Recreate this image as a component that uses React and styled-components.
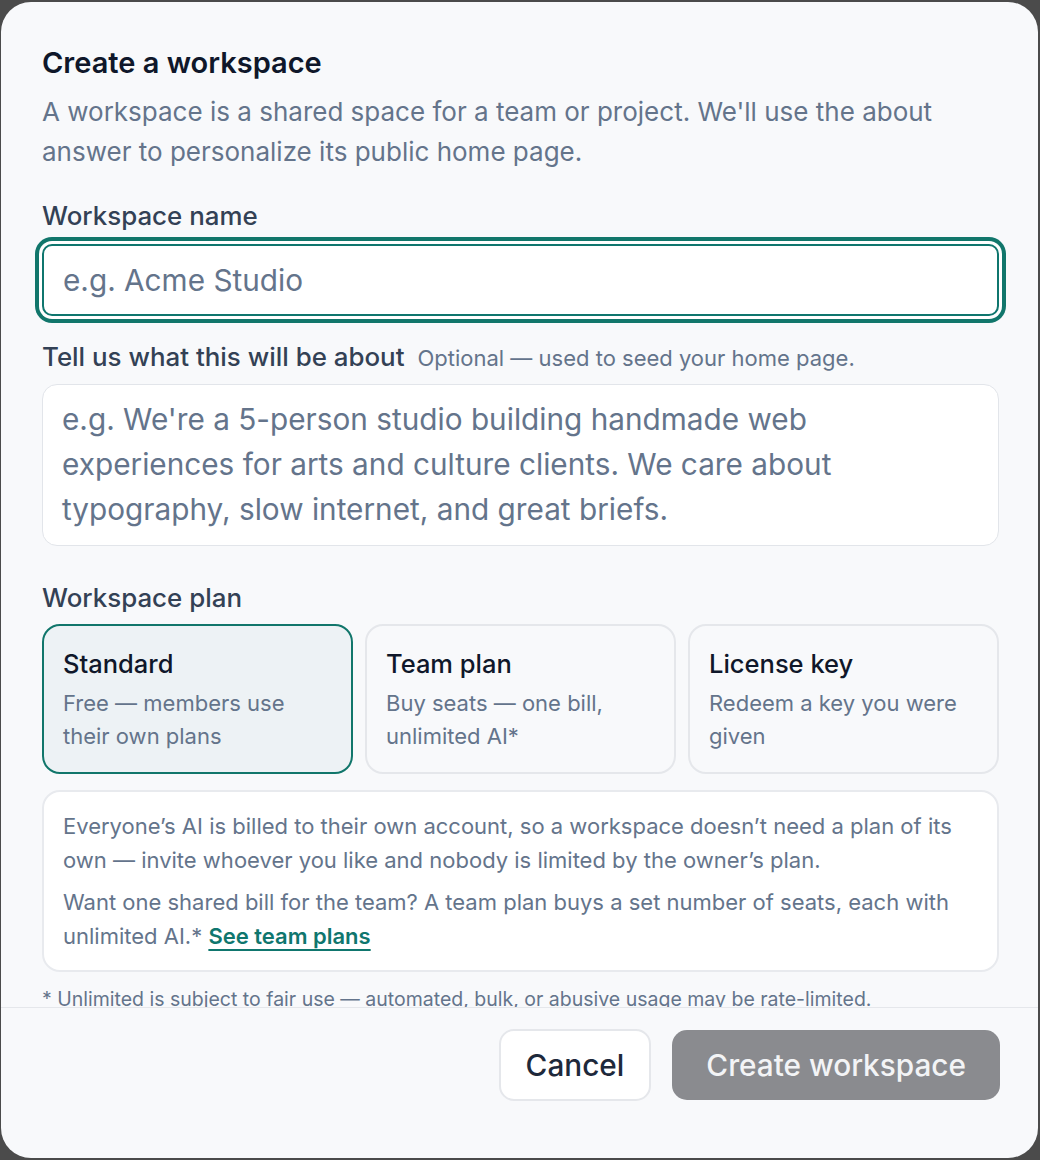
import React from "react";
import styled, { createGlobalStyle } from "styled-components";

const Global = createGlobalStyle`
  html, body { margin: 0; padding: 0; }
  body {
    background: #4b4b4b;
    font-family: Inter, "Noto Sans", "Liberation Sans", sans-serif;
    -webkit-font-smoothing: antialiased;
  }
  * { box-sizing: border-box; }
`;

const Stage = styled.div`
  width: 1040px;
  height: 1160px;
  padding: 2px 2px 2px 1px;
`;

const Modal = styled.div`
  width: 1037px;
  height: 1156px;
  background: #f8f9fb;
  border-radius: 30px;
  display: flex;
  flex-direction: column;
  overflow: hidden;
`;

const Body = styled.div`
  flex: 1;
  overflow: hidden;
  padding: 43px 39px 0 41px;
  display: flex;
  flex-direction: column;
`;

const Title = styled.h2`
  margin: 0;
  font-size: 29px;
  line-height: 36px;
  font-weight: 600;
  color: #0f172a;
`;

const Lead = styled.p`
  margin: 11px 0 0;
  font-size: 26px;
  line-height: 40px;
  color: #64748b;
`;

const Field = styled.div`
  display: flex;
  flex-direction: column;
  gap: ${(p) => p.$gap || 11}px;
  margin-top: ${(p) => p.$top}px;
`;

const LabelRow = styled.div`
  display: flex;
  align-items: baseline;
  gap: 13px;
`;

const Label = styled.label`
  font-size: 25.9px;
  line-height: 34px;
  font-weight: 500;
  color: #334155;
`;

const Hint = styled.span`
  font-size: 22px;
  color: #64748b;
`;

const TextInput = styled.input`
  width: 100%;
  height: 72px;
  border: 2px solid #0f766e;
  border-radius: 10px;
  background: #fff;
  box-shadow: 0 0 0 3px #fff, 0 0 0 7px #11766b;
  padding: 0 19px;
  font-family: inherit;
  font-size: 29.75px;
  color: #0f172a;
  outline: none;
  &::placeholder { color: #64748b; }
`;

const TextArea = styled.textarea`
  width: 100%;
  height: 162px;
  border: 1.5px solid #e2e5ea;
  border-radius: 15px;
  background: #fff;
  padding: 12px 28px 12px 19px;
  font-family: inherit;
  font-size: 29.75px;
  line-height: 45px;
  color: #0f172a;
  resize: none;
  outline: none;
  overflow: hidden;
  display: block;
  &::placeholder { color: #64748b; }
`;

const Plans = styled.div`
  display: grid;
  grid-template-columns: repeat(3, 1fr);
  gap: 12px;
`;

const PlanCard = styled.div`
  height: 150px;
  border-radius: 18px;
  border: 2px solid ${(p) => (p.$selected ? "#11766b" : "#e5e7eb")};
  background: ${(p) => (p.$selected ? "#edf2f5" : "#f8f9fb")};
  padding: 21px 19px 0;
  display: flex;
  flex-direction: column;
  gap: 7px;
`;

const PlanTitle = styled.div`
  font-size: 25.5px;
  line-height: 33px;
  font-weight: 500;
  color: #0f172a;
`;

const PlanDesc = styled.div`
  font-size: 22px;
  line-height: 33px;
  color: #64748b;
`;

const InfoBox = styled.div`
  margin-top: 16px;
  background: #fff;
  border: 2px solid #e8eaee;
  border-radius: 18px;
  padding: 17px 19px 17px;
  display: flex;
  flex-direction: column;
  gap: 8px;
`;

const InfoText = styled.p`
  margin: 0;
  font-size: 22px;
  line-height: 34px;
  color: #64748b;
`;

const Link = styled.a`
  color: #0f766e;
  font-weight: 600;
  text-decoration: underline;
  text-decoration-thickness: 2px;
  text-underline-offset: 5px;
  cursor: pointer;
`;

const Footnote = styled.p`
  margin: 13px 0 0;
  font-size: 19.5px;
  line-height: 28px;
  color: #64748b;
  white-space: nowrap;
`;

const Footer = styled.div`
  border-top: 1.5px solid #e5e7eb;
  padding: 21px 38px 57px;
  display: flex;
  justify-content: flex-end;
  align-items: center;
  gap: 21px;
`;

const Button = styled.button`
  height: ${(p) => (p.$primary ? 70 : 72)}px;
  padding: 0 ${(p) => (p.$primary ? 34 : 25)}px;
  border-radius: 15px;
  border: ${(p) => (p.$primary ? "none" : "2px solid #e5e7eb")};
  background: ${(p) => (p.$primary ? "#8a8b8f" : "#fff")};
  color: ${(p) => (p.$primary ? "#f3f4f6" : "#1e293b")};
  font-family: inherit;
  font-size: 29.75px;
  font-weight: 500;
  cursor: pointer;
`;

export default function App() {
  return (
    <Stage>
      <Global />
      <Modal>
        <Body>
          <Title>Create a workspace</Title>
          <Lead>
            A workspace is a shared space for a team or project. We'll use the about
            answer to personalize its public home page.
          </Lead>

          <Field $top={27}>
            <Label>Workspace name</Label>
            <TextInput placeholder="e.g. Acme Studio" />
          </Field>

          <Field $top={24} $gap={10}>
            <LabelRow>
              <Label>Tell us what this will be about</Label>
              <Hint>Optional — used to seed your home page.</Hint>
            </LabelRow>
            <TextArea
              rows={3}
              placeholder="e.g. We're a 5-person studio building handmade web experiences for arts and culture clients. We care about typography, slow internet, and great briefs."
            />
          </Field>

          <Field $top={35} $gap={9}>
            <Label>Workspace plan</Label>
            <Plans>
              <PlanCard $selected>
                <PlanTitle>Standard</PlanTitle>
                <PlanDesc>Free — members use their own plans</PlanDesc>
              </PlanCard>
              <PlanCard>
                <PlanTitle>Team plan</PlanTitle>
                <PlanDesc>Buy seats — one bill, unlimited AI*</PlanDesc>
              </PlanCard>
              <PlanCard>
                <PlanTitle>License key</PlanTitle>
                <PlanDesc>Redeem a key you were given</PlanDesc>
              </PlanCard>
            </Plans>
          </Field>

          <InfoBox>
            <InfoText>
              Everyone’s AI is billed to their own account, so a workspace doesn’t need a plan of its
              own — invite whoever you like and nobody is limited by the owner’s plan.
            </InfoText>
            <InfoText>
              Want one shared bill for the team? A team plan buys a set number of seats, each with
              unlimited AI.* <Link>See team plans</Link>
            </InfoText>
          </InfoBox>

          <Footnote>
            * Unlimited is subject to fair use — automated, bulk, or abusive usage may be rate-limited.
          </Footnote>
        </Body>
        <Footer>
          <Button>Cancel</Button>
          <Button $primary>Create workspace</Button>
        </Footer>
      </Modal>
    </Stage>
  );
}
